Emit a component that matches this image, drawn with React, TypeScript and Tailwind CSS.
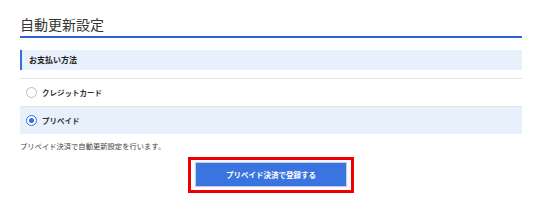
import React, { useState } from 'react';

const font = { fontFamily: '"Noto Sans CJK JP", "Noto Sans", sans-serif' };

const Radio: React.FC<{ checked: boolean }> = ({ checked }) => (
  <span
    className={`flex h-[11px] w-[11px] items-center justify-center rounded-full border bg-white ${
      checked ? 'border-[#2f6fe0]' : 'border-[#bcbcbc]'
    }`}
  >
    {checked && <span className="h-[5px] w-[5px] rounded-full bg-[#2f6fe0]" />}
  </span>
);

export default function App() {
  const [method, setMethod] = useState<'card' | 'prepaid'>('prepaid');

  return (
    <div className="h-[220px] w-[550px] bg-white" style={font}>
      <div className="mx-[20px] w-[502px]">
        <div className="border-b-2 border-[#2d62d0] pt-[14px] pb-[2px]">
          <h1 className="text-[14px] leading-[20px] text-[#333]">自動更新設定</h1>
        </div>

        <div className="mt-[12px] flex h-[20px] items-center border-l-2 border-[#3a6fd8] bg-[#e7f0fb] pl-[7px]">
          <span className="text-[8px] font-bold text-[#222]">お支払い方法</span>
        </div>

        <div className="mt-[8px] border-t border-[#e3e3e3]">
          <button
            type="button"
            onClick={() => setMethod('card')}
            className={`flex h-[27px] w-full items-center gap-[5px] pl-[6px] ${method === 'card' ? 'bg-[#e7f0fb]' : ''}`}
          >
            <Radio checked={method === 'card'} />
            <span className="text-[7.5px] font-bold text-[#333]">クレジットカード</span>
          </button>
          <button
            type="button"
            onClick={() => setMethod('prepaid')}
            className={`flex h-[28px] w-full items-center gap-[5px] border-t border-[#e3e3e3] pl-[6px] ${method === 'prepaid' ? 'bg-[#e7f0fb]' : ''}`}
          >
            <Radio checked={method === 'prepaid'} />
            <span className="text-[7.5px] font-bold text-[#333]">プリペイド</span>
          </button>
        </div>

        <p className="mt-[6px] text-[7.3px] leading-[12px] text-[#444]">プリペイド決済で自動更新設定を行います。</p>

        <div className="mt-[5px] flex justify-center">
          <div className="border-[3px] border-[#ee0000] px-[5px] pt-[3px] pb-[4px]">
            <button
              type="button"
              className="flex h-[23px] w-[150px] items-center justify-center bg-[#3a74e0] text-[7.5px] font-bold text-white shadow-[0_0_1px_1px_rgba(80,120,200,0.35)]"
            >
              プリペイド決済で登録する
            </button>
          </div>
        </div>
      </div>
    </div>
  );
}
